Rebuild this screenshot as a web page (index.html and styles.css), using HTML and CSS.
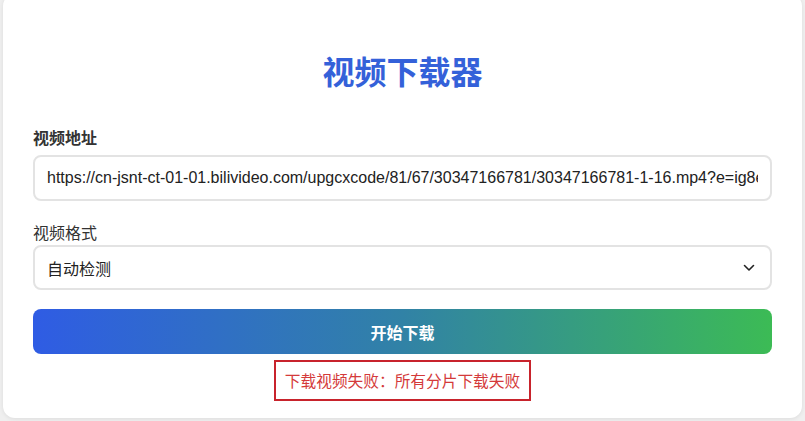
FILE: index.html
```html
<html>
	<head>
		<meta charset="utf-8">
		<link rel="stylesheet" href="styles.css">
	</head>
	<body>

		<div class="card">

			<h1 class="titulo">视频下载器</h1>

			<div class="campo">
				<label class="etiqueta etiquetaFuerte" for="urlVideo">视频地址</label>
				<input class="entrada" id="urlVideo" type="text" value="https://cn-jsnt-ct-01-01.bilivideo.com/upgcxcode/81/67/30347166781/30347166781-1-16.mp4?e=ig8euxZM2rNcNbdlhoNvNC8BqJIzNbfqXBvEqxTEto8BTrNvN0GvT90W5JZMkX_YN0MvXg8gNEV4NC8xNEV4N03eN0B5tZlqNxTEto8BTrNvNeZVuJ10Kj_g2UB02J0mN0B5tZlqNCNEto8BTrNvNC7MTX502C8f2jmMQJ6mqF2fka1mqx6gqj0eN0B599M=">
			</div>

			<div class="campo campoFormato">
				<label class="etiqueta" for="formato">视频格式</label>
				<div class="selectorCaja">
					<select class="entrada selector" id="formato">
						<option>自动检测</option>
						<option>MP4</option>
						<option>FLV</option>
					</select>
					<svg class="flecha" width="12" height="8" viewBox="0 0 12 8">
						<path d="M1.5 1.5 L6 6 L10.5 1.5" fill="none" stroke="#222" stroke-width="1.6" stroke-linecap="round" stroke-linejoin="round"/>
					</svg>
				</div>
			</div>

			<button class="botonDescargar">开始下载</button>

			<div class="mensaje">
				<span class="error">下载视频失败：所有分片下载失败</span>
			</div>

		</div>

	</body>
</html>
```

FILE: styles.css
```css
body {
	margin: 0;
	padding: 0 3px 3px 3px;
	background-color: #efefef;
	font-family: "Noto Sans CJK SC", "Liberation Sans", sans-serif;
	color: #333;
}

.card {
	margin-top: -6px;
	background-color: #fff;
	border-radius: 12px;
	box-shadow: 0 1px 4px rgba(0, 0, 0, 0.08);
	padding: 54px 30px 17px 30px;
}

.titulo {
	margin: 0 0 34px 0;
	text-align: center;
	font-size: 32px;
	line-height: 44px;
	font-weight: 700;
	color: #3461d9;
}

.campo {
	display: flex;
	flex-direction: column;
}

.campoFormato {
	margin-top: 20px;
}

.etiqueta {
	font-size: 16px;
	line-height: 22px;
	color: #333;
	margin-bottom: 7px;
}

.etiquetaFuerte {
	font-weight: 700;
}

.campoFormato .etiqueta {
	margin-bottom: 2px;
}

.entrada {
	box-sizing: border-box;
	width: 100%;
	height: 46px;
	border: 2px solid #e3e3e3;
	border-radius: 8px;
	padding: 0 12px;
	font-family: "Liberation Sans", "Noto Sans CJK SC", sans-serif;
	font-size: 16px;
	color: #222;
	background-color: #fff;
	outline: none;
}

.selectorCaja {
	position: relative;
}

.selector {
	height: 45px;
	appearance: none;
	font-family: "Noto Sans CJK SC", "Liberation Sans", sans-serif;
}

.flecha {
	position: absolute;
	right: 17px;
	top: 19px;
	pointer-events: none;
}

.botonDescargar {
	display: block;
	width: 100%;
	height: 45px;
	margin-top: 19px;
	border: none;
	border-radius: 8px;
	background: linear-gradient(90deg, #2f5ce4 0%, #3182a6 50%, #3cbb55 100%);
	color: #fff;
	font-family: "Noto Sans CJK SC", sans-serif;
	font-size: 16px;
	font-weight: 700;
}

.mensaje {
	display: flex;
	justify-content: center;
	margin-top: 6px;
}

.error {
	border: 2px solid #c8232c;
	padding: 8px 9px;
	font-size: 15.7px;
	line-height: 21px;
	color: #d43a3a;
}
```
